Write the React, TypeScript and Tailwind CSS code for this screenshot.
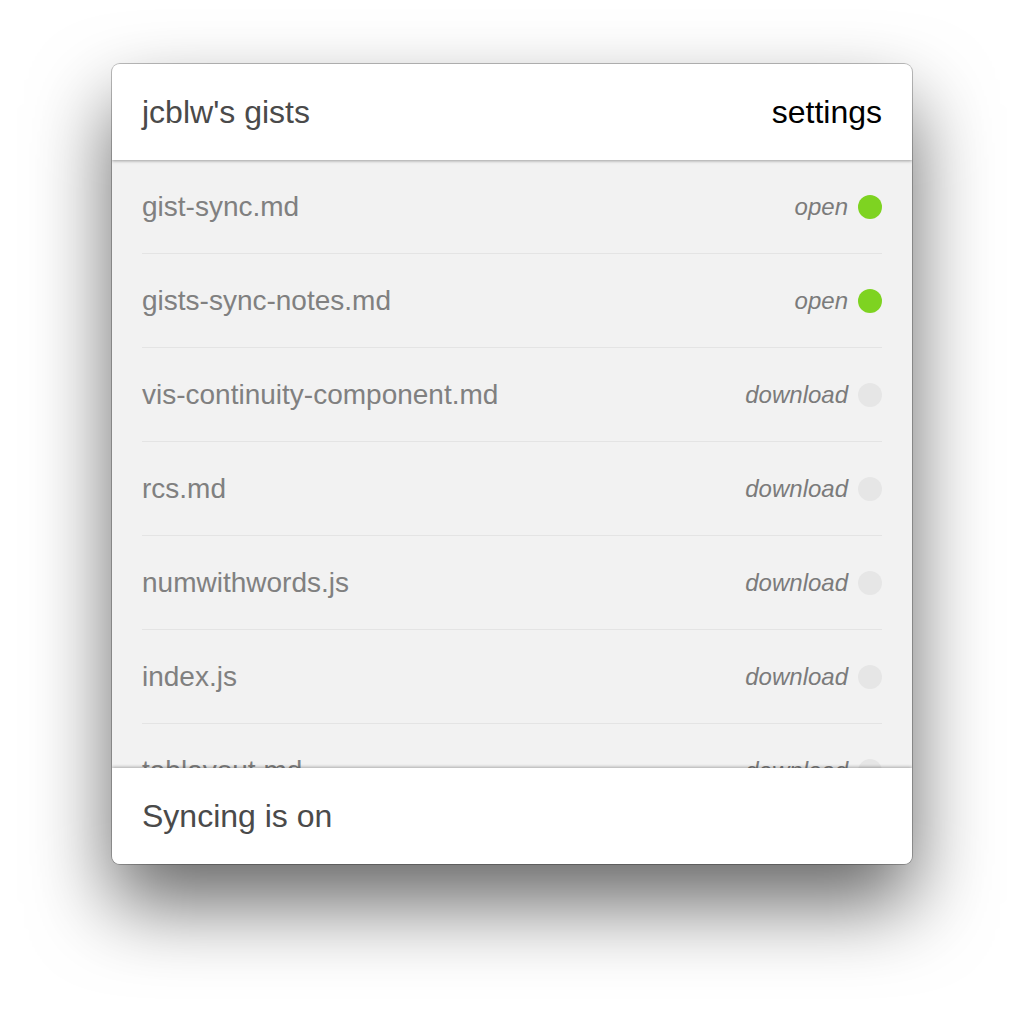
import React from "react";

type Gist = { name: string; status: "open" | "download" };

const gists: Gist[] = [
  { name: "gist-sync.md", status: "open" },
  { name: "gists-sync-notes.md", status: "open" },
  { name: "vis-continuity-component.md", status: "download" },
  { name: "rcs.md", status: "download" },
  { name: "numwithwords.js", status: "download" },
  { name: "index.js", status: "download" },
  { name: "tablayout.md", status: "download" },
];

const GistRow = ({ gist }: { gist: Gist }) => {
  const isOpen = gist.status === "open";
  return (
    <div className="mx-[30px] h-[94px] shrink-0 flex items-center justify-between border-b border-[#e4e4e4]">
      <span className="text-[28px] text-[#808080]">{gist.name}</span>
      <span className="flex items-center gap-[10px]">
        <span className="text-[24px] italic text-[#7b7b7b]">{gist.status}</span>
        <span
          className={
            isOpen
              ? "w-[24px] h-[24px] rounded-full bg-[#7ed321]"
              : "w-[24px] h-[24px] rounded-full bg-[#e6e6e6]"
          }
        />
      </span>
    </div>
  );
};

const App = () => {
  return (
    <div
      className="w-[1024px] h-[1024px] bg-white flex justify-center pt-[64px]"
      style={{ fontFamily: '"Liberation Sans", Arial, sans-serif' }}
    >
      <div className="w-[800px] h-[800px] rounded-[8px] bg-[#f2f2f2] flex flex-col overflow-hidden shadow-[0_40px_80px_rgba(0,0,0,0.6),0_0_0_1px_rgba(0,0,0,0.25)]">
        <div className="relative z-10 h-[96px] shrink-0 bg-white px-[30px] flex items-center justify-between shadow-[0_1px_3px_rgba(0,0,0,0.35)]">
          <span className="text-[32px] text-[#4a4a4a]">jcblw's gists</span>
          <span className="text-[32px] text-black">settings</span>
        </div>
        <div className="flex-1 flex flex-col overflow-hidden">
          {gists.map((g) => (
            <GistRow key={g.name} gist={g} />
          ))}
        </div>
        <div className="relative z-10 h-[96px] shrink-0 bg-white px-[30px] flex items-center shadow-[0_-1px_3px_rgba(0,0,0,0.3)]">
          <span className="text-[32px] text-[#4a4a4a]">Syncing is on</span>
        </div>
      </div>
    </div>
  );
};

export default App;
